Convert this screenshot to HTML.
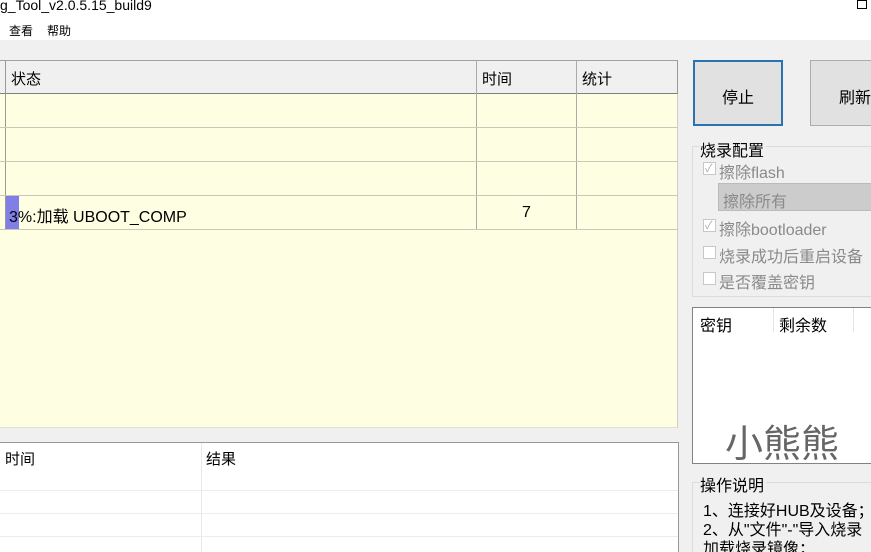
<!DOCTYPE html>
<html><head><meta charset="utf-8"><style>
*{margin:0;padding:0;box-sizing:border-box}
html,body{width:871px;height:552px;overflow:hidden}
body{background:#f0f0f0;font-family:"Liberation Sans","Noto Sans CJK SC",sans-serif;position:relative;color:#000}
.a{position:absolute}
.t{font-size:15px;white-space:nowrap}
.g{color:#8a8a8a}
.cb{position:absolute;width:13px;height:13px;border:1px solid #c8c8c8;background:#fff}
</style></head><body>
<div class="a" style="left:0;top:0;width:871px;height:40px;background:#fff"></div>
<div class="a t" style="left:0;top:-3px;font-size:14px">g_Tool_v2.0.5.15_build9</div>
<div class="a" style="left:857px;top:0;width:10px;height:9px;border:1px solid #000"></div>
<div class="a" style="left:9px;top:22px;font-size:12px">查看</div>
<div class="a" style="left:47px;top:22px;font-size:12px">帮助</div>

<div class="a" style="left:0;top:60px;width:678px;height:368px;background:#fefee2;border-right:1px solid #ccc;border-bottom:1px solid #e0e0d0"></div>
<div class="a" style="left:0;top:60px;width:678px;height:34px;background:#f0f0f0;border-top:1px solid #a0a0a0;border-bottom:1px solid #808080;border-right:1px solid #999"></div>
<div class="a" style="left:5px;top:60px;width:1px;height:170px;background:#999"></div>
<div class="a" style="left:476px;top:60px;width:1px;height:170px;background:#aaa"></div>
<div class="a" style="left:576px;top:60px;width:1px;height:170px;background:#aaa"></div>
<div class="a" style="left:0;top:127px;width:677px;height:1px;background:#c8c8b8"></div>
<div class="a" style="left:0;top:161px;width:677px;height:1px;background:#c8c8b8"></div>
<div class="a" style="left:0;top:195px;width:677px;height:1px;background:#c8c8b8"></div>
<div class="a" style="left:0;top:229px;width:677px;height:1px;background:#c8c8b8"></div>
<div class="a t" style="left:11px;top:68px">状态</div>
<div class="a t" style="left:482px;top:68px">时间</div>
<div class="a t" style="left:582px;top:68px">统计</div>
<div class="a" style="left:6px;top:196px;width:13px;height:33px;background:#7f7fe6"></div>
<div class="a t" style="left:9px;top:203px;font-size:16px">3%:加载 UBOOT_COMP</div>
<div class="a t" style="left:522px;top:204px;font-size:16px">7</div>

<div class="a" style="left:0;top:442px;width:679px;height:110px;background:#fff;border-top:1px solid #999;border-right:1px solid #999"></div>
<div class="a" style="left:201px;top:443px;width:1px;height:109px;background:#e8e8e8"></div>
<div class="a" style="left:0;top:490px;width:678px;height:1px;background:#ececec"></div>
<div class="a" style="left:0;top:513px;width:678px;height:1px;background:#ececec"></div>
<div class="a" style="left:0;top:536px;width:678px;height:1px;background:#ececec"></div>
<div class="a t" style="left:5px;top:448px">时间</div>
<div class="a t" style="left:206px;top:448px">结果</div>

<div class="a" style="left:693px;top:60px;width:90px;height:66px;background:#e1e1e1;border:2px solid #2a72b0"></div>
<div class="a t" style="left:722px;top:84px;font-size:16px">停止</div>
<div class="a" style="left:810px;top:60px;width:70px;height:66px;background:#e1e1e1;border:1px solid #adadad"></div>
<div class="a t" style="left:839px;top:84px;font-size:16px">刷新</div>

<div class="a" style="left:692px;top:146px;width:190px;height:151px;border:1px solid #dcdcdc"></div>
<div class="a t" style="left:700px;top:137px;background:#f0f0f0;padding-right:2px;font-size:16px">烧录配置</div>
<div class="cb" style="left:703px;top:162px"></div>
<div class="a" style="left:705px;top:160px;font-size:11px;color:#aaa">✓</div>
<div class="a t g" style="left:719px;top:159px;font-size:16px">擦除flash</div>
<div class="a" style="left:718px;top:183px;width:160px;height:28px;background:#cccccc;border:1px solid #bbb"></div>
<div class="a t g" style="left:723px;top:188px;font-size:16px">擦除所有</div>
<div class="cb" style="left:703px;top:219px"></div>
<div class="a" style="left:705px;top:217px;font-size:11px;color:#aaa">✓</div>
<div class="a t g" style="left:719px;top:216px;font-size:16px">擦除bootloader</div>
<div class="cb" style="left:703px;top:246px"></div>
<div class="a t g" style="left:719px;top:243px;font-size:16px">烧录成功后重启设备</div>
<div class="cb" style="left:703px;top:272px"></div>
<div class="a t g" style="left:719px;top:269px;font-size:16px">是否覆盖密钥</div>

<div class="a" style="left:692px;top:307px;width:190px;height:157px;background:#fff;border:1px solid #828282"></div>
<div class="a" style="left:773px;top:308px;width:1px;height:24px;background:#e5e5e5"></div>
<div class="a" style="left:853px;top:308px;width:1px;height:24px;background:#e5e5e5"></div>
<div class="a t" style="left:700px;top:312px;font-size:16px">密钥</div>
<div class="a t" style="left:779px;top:312px;font-size:16px">剩余数</div>
<div class="a" style="left:725px;top:413px;font-size:38px;color:#666;white-space:nowrap">小熊熊</div>

<div class="a" style="left:692px;top:482px;width:190px;height:80px;border:1px solid #dcdcdc"></div>
<div class="a t" style="left:700px;top:472px;background:#f0f0f0;padding-right:2px;font-size:16px">操作说明</div>
<div class="a t" style="left:703px;top:497px;font-size:16px">1、连接好HUB及设备；</div>
<div class="a t" style="left:703px;top:516px;font-size:16px">2、从"文件"-"导入烧录</div>
<div class="a t" style="left:703px;top:535px;font-size:16px">加载烧录镜像；</div>
</body></html>
